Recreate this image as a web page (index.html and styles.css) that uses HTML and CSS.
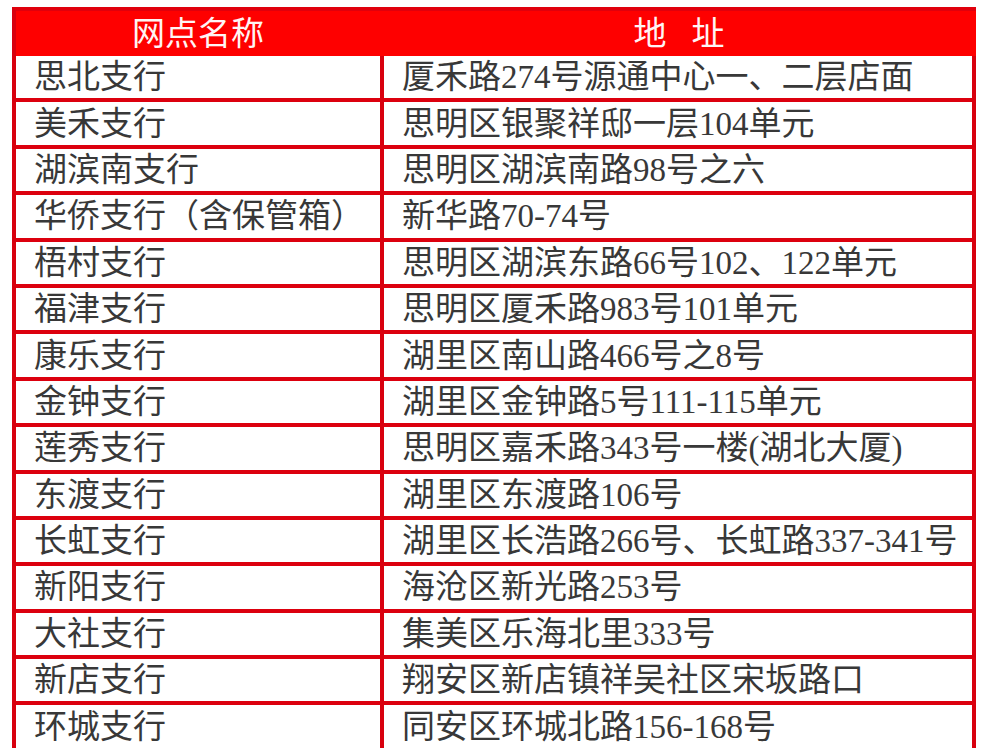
FILE: index.html
```html
<!DOCTYPE html>
<html lang="zh-CN">
<head>
<meta charset="utf-8">
<title>网点名称</title>
<link rel="stylesheet" href="styles.css">
</head>
<body>
<table class="branches">
  <thead>
    <tr>
      <th class="col-name">网点名称</th>
      <th class="col-addr"><span class="spaced">地</span>址</th>
    </tr>
  </thead>
  <tbody>
    <tr><td>思北支行</td><td>厦禾路274号源通中心一、二层店面</td></tr>
    <tr><td>美禾支行</td><td>思明区银聚祥邸一层104单元</td></tr>
    <tr><td>湖滨南支行</td><td>思明区湖滨南路98号之六</td></tr>
    <tr><td>华侨支行（含保管箱）</td><td>新华路70-74号</td></tr>
    <tr><td>梧村支行</td><td>思明区湖滨东路66号102、122单元</td></tr>
    <tr><td>福津支行</td><td>思明区厦禾路983号101单元</td></tr>
    <tr><td>康乐支行</td><td>湖里区南山路466号之8号</td></tr>
    <tr><td>金钟支行</td><td>湖里区金钟路5号111-115单元</td></tr>
    <tr><td>莲秀支行</td><td>思明区嘉禾路343号一楼(湖北大厦)</td></tr>
    <tr><td>东渡支行</td><td>湖里区东渡路106号</td></tr>
    <tr><td>长虹支行</td><td>湖里区长浩路266号、长虹路337-341号</td></tr>
    <tr><td>新阳支行</td><td>海沧区新光路253号</td></tr>
    <tr><td>大社支行</td><td>集美区乐海北里333号</td></tr>
    <tr><td>新店支行</td><td>翔安区新店镇祥吴社区宋坂路口</td></tr>
    <tr><td>环城支行</td><td>同安区环城北路156-168号</td></tr>
  </tbody>
</table>
</body>
</html>
```

FILE: styles.css
```css
html, body {
  margin: 0;
  padding: 0;
  background: #ffffff;
}

body {
  overflow: hidden;
}

.branches {
  margin: 7px 0 0 12px;
  width: 964px;
  border-spacing: 0;
  border-collapse: separate;
  table-layout: fixed;
  border-top: 4px solid #e0000c;
  border-left: 4px solid #d8000e;
  font-family: "Liberation Serif", "Noto Sans CJK SC", serif;
  font-size: 33px;
  color: #383838;
}

.branches th,
.branches td {
  border-right: 4px solid #d8000e;
  border-bottom: 4px solid #dc000e;
  padding: 0 0 0 18px;
  text-align: left;
  white-space: nowrap;
  line-height: 42px;
  box-sizing: content-box;
}

.branches th {
  background: #fe0000;
  color: #fff4f4;
  font-weight: normal;
  text-align: center;
  padding: 0;
  height: 41px;
  line-height: 41px;
  font-family: "Noto Sans CJK SC", sans-serif;
}

.branches th.col-name {
  width: 364px;
  border-right-color: #fe0000;
  border-bottom-color: #fe0000;
}

.branches th.col-addr {
  border-right-color: #fe0000;
  border-bottom-color: #fe0000;
  padding-left: 2px;
}

.spaced {
  margin-right: 25px;
}

.branches td {
  height: 42.4px;
}
```
